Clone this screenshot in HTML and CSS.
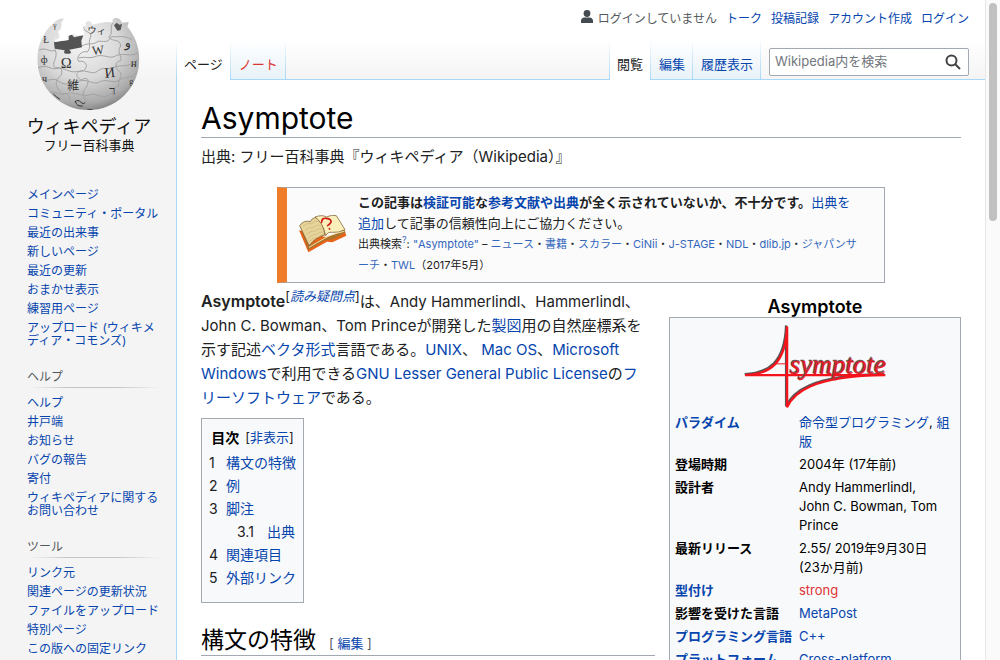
FILE: index.html
```html
<!DOCTYPE html>
<html lang="ja">
<head>
<meta charset="utf-8">
<meta name="viewport" content="width=device-width, initial-scale=1">
<title>Asymptote - Wikipedia</title>
<link rel="stylesheet" href="styles.css">
</head>
<body>
<div class="window">
<div class="page">
  <aside class="sidebar">
    <a class="logo" href="#" aria-label="メインページ">
      <svg class="globe" viewBox="108 48 318 288" aria-hidden="true">
        <defs>
          <radialGradient id="ball" cx="0.42" cy="0.3" r="0.72">
            <stop offset="0" stop-color="#f4f4f4"/>
            <stop offset="0.5" stop-color="#d9d9d9"/>
            <stop offset="0.85" stop-color="#a9a9a9"/>
            <stop offset="1" stop-color="#777"/>
          </radialGradient>
          <clipPath id="edge"><path d="M192 56C180 54 170 60 160 70C130 96 112 136 112 178A153 152 0 0 0 418 178C418 140 404 106 382 80L386 66L366 68Q360 52 346 54Q332 58 340 68Q320 64 304 68L276 74Q274 62 264 64Q254 66 258 76L250 80L252 106L234 106L218 102L206 108L206 120L164 126L166 118Q180 120 178 106Q170 94 182 88Q186 78 184 68Z"/></clipPath>
        </defs>
        <g clip-path="url(#edge)">
          <rect x="108" y="48" width="318" height="288" fill="url(#ball)"/>
          <g fill="none" stroke="#a2a2a2" stroke-width="3">
            <path d="M118 150C140 140 150 160 166 150C176 176 150 190 166 204C186 196 192 220 178 232C160 242 170 270 188 282C204 274 216 296 206 322"/>
            <path d="M250 80C252 100 276 92 272 112C262 128 276 140 262 156C246 150 226 170 236 184C258 180 268 200 250 212C228 214 222 228 244 240C270 224 268 252 254 268C240 290 262 300 276 326"/>
            <path d="M340 66C326 84 342 98 326 112C342 128 360 114 362 138C348 158 368 166 362 182C342 186 346 206 358 214C372 226 352 240 356 258C336 262 332 286 346 302"/>
            <path d="M114 204C140 190 152 210 168 206C192 198 206 222 236 214C262 208 276 226 292 214C310 198 322 212 342 202C366 192 384 206 416 178"/>
            <path d="M122 238C150 246 160 230 176 244C200 262 218 244 244 242C268 238 282 258 302 244C326 236 340 254 362 238C384 228 398 236 410 216"/>
            <path d="M146 278C168 272 180 290 202 280C226 274 244 290 264 286C290 274 306 302 326 284C346 276 360 284 380 266"/>
            <path d="M246 138C266 126 276 138 294 124C310 122 322 132 334 110C354 112 374 104 396 120M236 174C254 168 272 178 290 168C316 162 330 180 350 166C376 158 392 172 414 158"/>
          </g>
          <path fill="#545454" d="M162 126L204 120Q196 110 206 106Q218 100 222 112L250 106L244 122L246 142L208 149Q220 162 204 161Q188 164 194 151L164 146Z"/>
          <g class="globe-letters">
            <text x="182" y="203" font-size="44">Ω</text>
            <text x="276" y="164" font-size="38" transform="rotate(-6 290 150)">W</text>
            <text x="313" y="232" font-size="44" transform="rotate(-6 330 215)">И</text>
            <text x="202" y="269" font-size="36">維</text>
            <text x="262" y="101" font-size="28" transform="rotate(4 280 90)">ウィ</text>
            <text x="374" y="142" font-size="38">و</text>
            <text x="328" y="286" font-size="38">ר</text>
            <text x="130" y="128" font-size="28">Ł</text>
            <text x="122" y="188" font-size="32">ф</text>
            <text x="126" y="246" font-size="30">ч</text>
            <text x="160" y="84" font-size="22">γ</text>
            <text x="392" y="202" font-size="28">អ</text>
            <text x="388" y="252" font-size="24">g</text>
          </g>
          <path fill="#555" d="M342 76L350 68L358 74L366 72L362 90L352 92Z"/>
          <path fill="none" stroke="#333" stroke-width="3" d="M224 306Q234 296 244 308Q250 314 256 308M226 304Q230 320 248 318M160 282Q170 292 180 298M262 330L278 328"/>
        </g>
      </svg>
      <span class="wordmark">ウィキペディア</span>
      <span class="motto">フリー百科事典</span>
    </a>
    <nav class="portal" aria-label="案内">
      <ul>
        <li><a href="#">メインページ</a></li>
        <li><a href="#">コミュニティ・ポータル</a></li>
        <li><a href="#">最近の出来事</a></li>
        <li><a href="#">新しいページ</a></li>
        <li><a href="#">最近の更新</a></li>
        <li><a href="#">おまかせ表示</a></li>
        <li><a href="#">練習用ページ</a></li>
        <li><a href="#">アップロード (ウィキメディア・コモンズ)</a></li>
      </ul>
    </nav>
    <nav class="portal">
      <h3>ヘルプ</h3>
      <ul>
        <li><a href="#">ヘルプ</a></li>
        <li><a href="#">井戸端</a></li>
        <li><a href="#">お知らせ</a></li>
        <li><a href="#">バグの報告</a></li>
        <li><a href="#">寄付</a></li>
        <li><a href="#">ウィキペディアに関するお問い合わせ</a></li>
      </ul>
    </nav>
    <nav class="portal">
      <h3>ツール</h3>
      <ul>
        <li><a href="#">リンク元</a></li>
        <li><a href="#">関連ページの更新状況</a></li>
        <li><a href="#">ファイルをアップロード</a></li>
        <li><a href="#">特別ページ</a></li>
        <li><a href="#">この版への固定リンク</a></li>
      </ul>
    </nav>
  </aside>

  <div class="main">
    <header>
      <ul class="personal">
        <li class="anon">
          <svg viewBox="0 0 12 14" aria-hidden="true"><circle cx="6" cy="3.5" r="3.4"/><path d="M0 13V11C0 8.700 1.500 7.500 3.500 7.500H8.500C10.500 7.500 12 8.700 12 11V13Z"/></svg>
          <span>ログインしていません</span>
        </li>
        <li><a href="#">トーク</a></li>
        <li><a href="#">投稿記録</a></li>
        <li><a href="#">アカウント作成</a></li>
        <li><a href="#">ログイン</a></li>
      </ul>
      <div class="tabs">
        <a class="tab current" href="#">ページ</a>
        <a class="tab missing" href="#">ノート</a>
        <span class="filler"></span>
        <a class="tab current" href="#">閲覧</a>
        <a class="tab" href="#">編集</a>
        <a class="tab" href="#">履歴表示</a>
        <form class="search">
          <div class="search-box">
            <input type="search" placeholder="Wikipedia内を検索" aria-label="Wikipedia内を検索">
            <button type="button" aria-label="検索">
              <svg viewBox="0 0 16 16" aria-hidden="true"><circle cx="6.500" cy="6.500" r="5"/><path d="M10 10L15 15"/></svg>
            </button>
          </div>
        </form>
      </div>
    </header>

    <main class="article">
      <h1>Asymptote</h1>
      <p class="tagline">出典: フリー百科事典『ウィキペディア（Wikipedia）』</p>

      <div class="notice">
        <svg class="book" viewBox="0 0 144 114" aria-hidden="true">
          <path fill="#e8641b" d="M0 46L28 112L84 80L100 82L142 62L138 50L80 66Z"/>
          <path fill="#a8742c" d="M4 36L28 104L78 76L104 72L140 52L136 44L28 92Z"/>
          <path fill="#e6d49a" stroke="#6b4a1c" stroke-width="2" stroke-linejoin="round" d="M2 32Q14 14 34 20Q40 6 56 8Q72 22 78 60Q52 64 30 92Z"/>
          <path fill="#fbf0bb" stroke="#6b4a1c" stroke-width="2" stroke-linejoin="round" d="M48 6Q70 -2 82 6Q98 -2 112 2L138 44Q118 54 100 52Q86 50 80 62Q72 22 48 6Z"/>
          <path fill="none" stroke="#c9b57c" stroke-width="2" d="M12 34Q24 22 38 26Q48 14 60 20M18 46Q30 34 42 38Q54 26 66 32M22 58Q36 46 48 48Q58 38 70 42M28 70Q40 56 52 58Q62 48 74 52M30 80Q42 68 54 68L76 56"/>
          <path fill="none" stroke="#f3e3a8" stroke-width="3" d="M30 97L78 69Q96 58 136 49"/>
          <path fill="none" stroke="#cf1b12" stroke-width="5" stroke-linecap="round" d="M68 22Q68 8 82 10Q98 12 96 22Q92 28 86 32M91 41L92 42"/>
        </svg>
        <div class="notice-text">
          <p><b>この記事は<a href="#">検証可能</a>な<a href="#">参考文献や出典</a>が全く示されていないか、不十分です。</b><a href="#">出典を<br>追加</a>して記事の信頼性向上にご協力ください。</p>
          <p class="sources">出典検索<sup><a href="#">?</a></sup>: <a href="#">"Asymptote"</a> – <a href="#">ニュース</a>・<a href="#">書籍</a>・<a href="#">スカラー</a>・<a href="#">CiNii</a>・<a href="#">J-STAGE</a>・<a href="#">NDL</a>・<a href="#">dlib.jp</a>・<a href="#">ジャパンサ<br>ーチ</a>・<a href="#">TWL</a>（2017年5月）</p>
        </div>
      </div>

      <table class="infobox">
        <caption>Asymptote</caption>
        <tbody>
          <tr><td class="emblem" colspan="2">
            <svg viewBox="250 98 434 260" role="img" aria-label="Asymptote">
              <path class="shade" d="M255 251C327 247 375 217 379 105V347C397 307 447 253 673 251"/>
              <g class="ink">
                <path d="M256 254H676M258 254C330 250 378 220 382 108V350C400 310 450 256 676 254"/>
                <path class="bar" d="M346 220H380"/>
                <text x="391" y="250">symptote</text>
              </g>
            </svg>
          </td></tr>
          <tr><th scope="row"><a href="#">パラダイム</a></th><td><a href="#">命令型プログラミング</a>, <a href="#">組版</a></td></tr>
          <tr><th scope="row">登場時期</th><td>2004年 (17年前)</td></tr>
          <tr><th scope="row">設計者</th><td>Andy Hammerlindl,<br>John C. Bowman, Tom<br>Prince</td></tr>
          <tr><th scope="row">最新リリース</th><td>2.55/ 2019年9月30日<br>(23か月前)</td></tr>
          <tr><th scope="row"><a href="#">型付け</a></th><td><a class="missing" href="#">strong</a></td></tr>
          <tr><th scope="row">影響を受けた言語</th><td><a href="#">MetaPost</a></td></tr>
          <tr><th scope="row"><a href="#">プログラミング言語</a></th><td><a href="#">C++</a></td></tr>
          <tr><th scope="row"><a href="#">プラットフォーム</a></th><td><a href="#">Cross-platform</a></td></tr>
        </tbody>
      </table>

      <p class="lead"><b>Asymptote</b><sup>[<a href="#"><i>読み疑問点</i></a>]</sup>は、Andy Hammerlindl、Hammerlindl、John C. Bowman、Tom Princeが開発した<a href="#">製図</a>用の自然座標系を示す記述<a href="#">ベクタ形式</a>言語である。<a href="#">UNIX</a>、 <a href="#">Mac OS</a>、<a href="#">Microsoft Windows</a>で利用できる<a href="#">GNU Lesser General Public License</a>の<a href="#">フ<br>リーソフトウェア</a>である。</p>

      <nav class="toc" aria-labelledby="toc-title">
        <div class="toc-head"><h2 id="toc-title">目次</h2><span>[<button type="button">非表示</button>]</span></div>
        <ul>
          <li><span>1</span><a href="#">構文の特徴</a></li>
          <li><span>2</span><a href="#">例</a></li>
          <li><span>3</span><a href="#">脚注</a></li>
          <li class="nested"><span>3.1</span><a href="#">出典</a></li>
          <li><span>4</span><a href="#">関連項目</a></li>
          <li><span>5</span><a href="#">外部リンク</a></li>
        </ul>
      </nav>

      <h2 class="section">構文の特徴<span class="edit">[ <a href="#">編集</a> ]</span></h2>
    </main>
  </div>
</div>
<div class="scrollbar" aria-hidden="true"><div class="thumb"></div></div>
</div>
</body>
</html>
```

FILE: styles.css
```css
* {
  box-sizing: border-box;
}

body {
  margin: 0;
  font-family: Inter, "Noto Sans CJK JP", sans-serif;
  font-size: 15px;
  line-height: 24px;
  color: #202122;
  background: #fff;
}

a {
  color: #0645ad;
  text-decoration: none;
}

a:hover {
  text-decoration: underline;
}

a.missing {
  color: #dd3333;
}

ul, h1, h2, h3, p {
  margin: 0;
  padding: 0;
  list-style: none;
}

.window {
  display: flex;
  height: 100vh;
  overflow: hidden;
}

.page {
  flex: 1;
  display: grid;
  grid-template-columns: 176px minmax(0, 1fr);
  overflow: hidden;
  background: linear-gradient(#fff 40px, #f4f4f4 80px);
}

.scrollbar {
  width: 15px;
  padding: 3px;
  background: #fafafa;
  border-left: 1px solid #e8e8e8;
}

.thumb {
  width: 8px;
  height: 33vh;
  border-radius: 4px;
  background: #c1c1c1;
}

/* Sidebar */

.sidebar {
  padding: 16px 16px 0 27px;
  font-size: 12px;
  line-height: 13px;
}

.logo {
  display: flex;
  flex-direction: column;
  align-items: center;
  width: 124px;
  margin-bottom: 34px;
  color: #111;
}

.globe {
  width: 106px;
  height: 96px;
}

.globe-letters {
  fill: #333;
  font-family: "Liberation Serif", "DejaVu Sans", "Noto Sans CJK JP", serif;
}

.wordmark {
  margin-top: 3px;
  font-size: 18px;
  line-height: 24px;
  white-space: nowrap;
}

.motto {
  font-size: 13px;
  line-height: 12px;
}

.portal li {
  padding: 3px 0;
}

.portal h3 {
  margin: 16px 0 5px;
  padding: 1px 0 2px;
  color: #54595d;
  font-size: 12px;
  font-weight: 400;
  line-height: 19px;
  background: linear-gradient(to right, transparent, #c0c3c7 33%, #c0c3c7 66%, transparent) bottom / 100% 1px no-repeat;
}

/* Header */

header {
  display: flex;
  flex-direction: column;
  height: 80px;
}

.personal {
  display: flex;
  justify-content: flex-end;
  gap: 9px;
  height: 40px;
  padding: 9px 16px 0 0;
  font-size: 12px;
  line-height: 20px;
}

.anon {
  display: flex;
  gap: 5px;
  color: #54595d;
}

.anon svg {
  width: 12px;
  height: 14px;
  margin-top: 1px;
  fill: #444b50;
}

.tabs {
  display: flex;
  height: 40px;
  background: linear-gradient(#fff0, #a7d7f9) left / 1px 100% no-repeat;
}

.tab {
  padding: 12px 8px 0;
  font-size: 13px;
  line-height: 24px;
  white-space: nowrap;
  border-bottom: 1px solid #a7d7f9;
  background:
    linear-gradient(#fff0, #a7d7f9) right / 1px 100% no-repeat,
    linear-gradient(#fff, #e8f2f8);
}

.tab.current {
  color: #202122;
  border-bottom: 0;
  background:
    linear-gradient(#fff0, #a7d7f9) left / 1px 100% no-repeat,
    linear-gradient(#fff0, #a7d7f9) right / 1px 100% no-repeat,
    #fff;
}

.filler {
  flex: 1;
  border-bottom: 1px solid #a7d7f9;
}

.search {
  flex: 0 0 224px;
  min-width: 0;
  padding: 8px 16px 0 8px;
  border-bottom: 1px solid #a7d7f9;
}

.search-box {
  display: flex;
  height: 28px;
  border: 1px solid #a2a9b1;
  border-radius: 2px;
  background: #fff;
}

.search input {
  flex: 1;
  width: 100%;
  min-width: 0;
  padding: 0 0 2px 5px;
  border: 0;
  outline: 0;
  background: none;
  font: inherit;
  font-size: 13px;
}

.search input::placeholder {
  color: #72777d;
}

.search button {
  flex: none;
  width: 30px;
  padding: 5px 7px;
  border: 0;
  background: none;
}

.search svg {
  display: block;
  width: 16px;
  height: 16px;
  fill: none;
  stroke: #404244;
  stroke-width: 2;
}

/* Article */

.article {
  min-height: calc(100vh - 80px);
  padding: 20px 24px;
  background: #fff;
  border-left: 1px solid #a7d7f9;
}

h1 {
  padding-bottom: 1px;
  color: #000;
  font-size: 30px;
  font-weight: 400;
  line-height: 36px;
  border-bottom: 1px solid #a2a9b1;
}

.tagline {
  margin-top: 7px;
}

.notice {
  display: flex;
  align-items: center;
  width: 80%;
  margin: 18px auto 6px;
  padding: 4px 8px 6px 12px;
  border: 1px solid #a2a9b1;
  border-left: 10px solid #ee7c28;
  background: #fbfbfb;
}

.book {
  flex: none;
  width: 48px;
  height: 38px;
}

.notice-text {
  flex: 1;
  margin-left: 11px;
  font-size: 13px;
  line-height: 21px;
  white-space: nowrap;
}

.sources {
  font-size: 11px;
}

.sources a {
  color: #3366bb;
}

sup {
  line-height: 1px;
}

.sources sup {
  font-size: 9px;
}

.infobox {
  float: right;
  width: 292px;
  margin: 8px 0 0 14px;
  padding: 3px;
  border: 1px solid #a2a9b1;
  border-spacing: 2px;
  background: #f8f9fa;
  color: #000;
  font-size: 13px;
  line-height: 19px;
  text-align: left;
}

.infobox caption {
  font-size: 18px;
  font-weight: 600;
  line-height: 20px;
}

.infobox th,
.infobox td {
  padding: 1px 0;
  vertical-align: top;
}

.infobox th {
  width: 122px;
  white-space: nowrap;
}

.infobox .emblem {
  padding: 0;
  text-align: center;
}

.emblem svg {
  display: block;
  width: 145px;
  height: 87px;
  margin: 0 auto;
}

.emblem text {
  font-family: "Liberation Serif", serif;
  font-size: 81px;
  font-style: italic;
  stroke-width: 1;
  text-shadow: -1px -1px 0 #555;
}

.emblem path {
  fill: none;
  stroke-width: 7;
}

.emblem .bar {
  stroke-width: 3;
}

.emblem .shade {
  stroke: #555;
}

.ink {
  fill: #f5141c;
  stroke: #f5141c;
}

.lead b {
  font-size: 16px;
  font-weight: 600;
}

.lead sup {
  font-size: 13px;
}

.toc {
  width: fit-content;
  margin-top: 8px;
  padding: 7px 7px 13px;
  border: 1px solid #a2a9b1;
  background: #f8f9fa;
  font-size: 14px;
  line-height: 23px;
}

.toc-head {
  display: flex;
  justify-content: center;
  gap: 6px;
  padding-bottom: 2px;
  font-size: 13px;
}

.toc-head h2 {
  color: #000;
  font-size: 14px;
  line-height: 23px;
}

.toc button {
  padding: 0;
  border: 0;
  background: none;
  color: #0645ad;
  font: inherit;
}

.toc li {
  display: flex;
  gap: 8px;
}

.toc li span {
  min-width: 9px;
}

.toc .nested {
  padding-left: 28px;
}

.toc .nested span {
  min-width: 22px;
}

.section {
  overflow: hidden;
  margin-top: 22px;
  color: #000;
  font-size: 23px;
  font-weight: 400;
  line-height: 30px;
  border-bottom: 1px solid #a2a9b1;
}

.edit {
  margin-left: 13px;
  color: #54595d;
  font-size: 13px;
  line-height: 13px;
}
```
